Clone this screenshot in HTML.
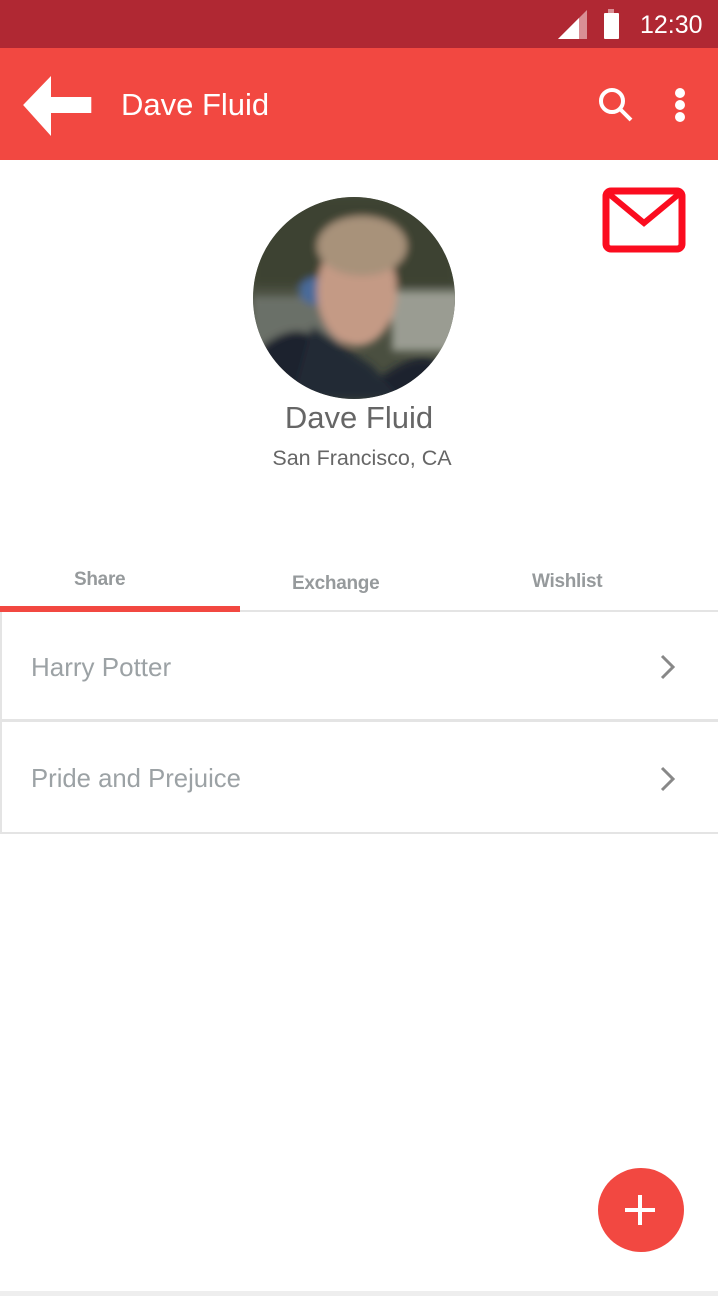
<!DOCTYPE html>
<html><head><meta charset="utf-8"><style>
*{margin:0;padding:0;box-sizing:border-box}
body{width:718px;height:1296px;background:#fff;position:relative;overflow:hidden;font-family:"Liberation Sans",Roboto,sans-serif}
.abs{position:absolute}
</style></head><body>
<div class="abs" style="left:0;top:0;width:718px;height:48px;background:#b02833"></div>
<svg class="abs" style="left:556px;top:8px" width="32" height="32" viewBox="0 0 32 32"><polygon points="2,31 31,2 31,31" fill="#d98f95"/><polygon points="2,31 23,10 23,31" fill="#fff"/></svg>
<div class="abs" style="left:608px;top:9px;width:6px;height:4px;background:#d98f95"></div>
<div class="abs" style="left:604px;top:13px;width:15px;height:26px;background:#fff;border-radius:1px"></div>
<div class="abs" style="left:640px;top:10px;color:#fff;font-size:25px;line-height:30px">12:30</div>
<div class="abs" style="left:0;top:48px;width:718px;height:112px;background:#f24841"></div>
<svg class="abs" style="left:20px;top:74px" width="72" height="64" viewBox="0 0 72 64"><polygon points="2,31 20,2 20,23 46,23 46,39 20,39 20,62" fill="#fff" transform="scale(1.55,1)" /></svg>
<div class="abs" style="left:121px;top:85px;color:#fff;font-size:31px;line-height:40px">Dave Fluid</div>
<svg class="abs" style="left:596px;top:85px" width="40" height="40" viewBox="0 0 40 40"><circle cx="16" cy="16" r="11" fill="none" stroke="#fff" stroke-width="4"/><line x1="24" y1="24" x2="35" y2="35" stroke="#fff" stroke-width="4"/></svg>
<div class="abs" style="left:675px;top:88px;width:10px;height:10px;border-radius:5px;background:#fff"></div>
<div class="abs" style="left:675px;top:100px;width:10px;height:10px;border-radius:5px;background:#fff"></div>
<div class="abs" style="left:675px;top:112px;width:10px;height:10px;border-radius:5px;background:#fff"></div>
<svg class="abs" style="left:602px;top:187px" width="84" height="66" viewBox="0 0 84 66"><rect x="4" y="4" width="76" height="58" rx="5" fill="none" stroke="#fb0c1f" stroke-width="7"/><polyline points="7,7 42,36 77,7" fill="none" stroke="#fb0c1f" stroke-width="6"/></svg>
<svg class="abs" style="left:252px;top:196px" width="204" height="204" viewBox="0 0 204 204">
<defs><clipPath id="c"><circle cx="102" cy="102" r="101"/></clipPath><filter id="b"><feGaussianBlur stdDeviation="4"/></filter></defs>
<g clip-path="url(#c)">
<rect width="204" height="204" fill="#4a4f40"/>
<g filter="url(#b)">
<rect x="0" y="0" width="204" height="90" fill="#3c4233"/>
<rect x="0" y="100" width="90" height="60" fill="#6b6f68"/>
<rect x="140" y="95" width="70" height="60" fill="#9a9c92"/>
<ellipse cx="65" cy="95" rx="18" ry="14" fill="#4a6a9a"/>
<ellipse cx="105" cy="95" rx="40" ry="55" fill="#c49a85"/>
<ellipse cx="110" cy="50" rx="45" ry="30" fill="#a8927a"/>
<path d="M0 204 L10 150 Q50 120 70 150 L130 180 Q170 150 190 170 L204 204 Z" fill="#1f242e"/>
<path d="M40 204 L60 130 L120 170 L150 204 Z" fill="#232935"/>
</g></g></svg>
<div class="abs" style="left:0;top:398px;width:718px;text-align:center;color:#666;font-size:31px;line-height:40px">Dave Fluid</div>
<div class="abs" style="left:0;top:444px;width:718px;text-align:center;color:#666;font-size:21.5px;line-height:28px;padding-left:6px">San Francisco, CA</div>
<div class="abs" style="left:74px;top:569px;color:#969a9c;font-size:19px;font-weight:bold;letter-spacing:-0.3px">Share</div>
<div class="abs" style="left:292px;top:573px;color:#969a9c;font-size:19px;font-weight:bold;letter-spacing:-0.3px">Exchange</div>
<div class="abs" style="left:532px;top:571px;color:#969a9c;font-size:19px;font-weight:bold;letter-spacing:-0.3px">Wishlist</div>
<div class="abs" style="left:0;top:610px;width:718px;height:2px;background:#e4e4e4"></div>
<div class="abs" style="left:0;top:606px;width:240px;height:6px;background:#f24841"></div>
<div class="abs" style="left:0;top:612px;width:718px;height:110px;border-left:2px solid #e4e4e4;border-bottom:3px solid #e4e4e4"></div>
<div class="abs" style="left:0;top:722px;width:718px;height:112px;border-left:2px solid #e4e4e4;border-bottom:2px solid #e4e4e4"></div>
<div class="abs" style="left:31px;top:651px;color:#9ca2a5;font-size:26px;line-height:32px">Harry Potter</div>
<div class="abs" style="left:31px;top:763px;color:#9ca2a5;font-size:25.7px;line-height:32px">Pride and Prejuice</div>
<svg class="abs" style="left:658px;top:654px" width="20" height="26" viewBox="0 0 20 26"><polyline points="4,2 15,13 4,24" fill="none" stroke="#888" stroke-width="3"/></svg>
<svg class="abs" style="left:658px;top:766px" width="20" height="26" viewBox="0 0 20 26"><polyline points="4,2 15,13 4,24" fill="none" stroke="#888" stroke-width="3"/></svg>
<div class="abs" style="left:598px;top:1168px;width:86px;height:84px;border-radius:50%;background:#f24841"></div>
<div class="abs" style="left:625px;top:1208px;width:30px;height:4px;background:#fff"></div>
<div class="abs" style="left:638px;top:1195px;width:4px;height:30px;background:#fff"></div>
<div class="abs" style="left:0;top:1291px;width:718px;height:5px;background:#eeeeee"></div>
</body></html>
